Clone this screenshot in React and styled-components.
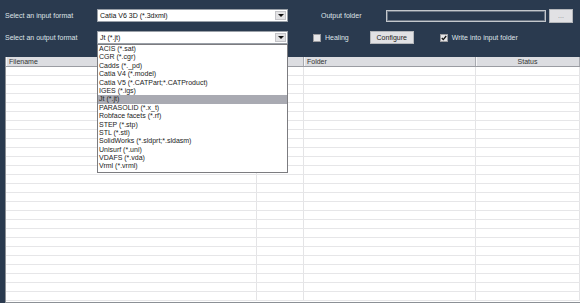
import styled, { createGlobalStyle } from 'styled-components';

const GlobalStyle = createGlobalStyle`
  html, body {
    margin: 0;
    padding: 0;
    background: #2a3a4f;
  }
  * {
    box-sizing: border-box;
  }
`;

const Window = styled.div`
  width: 580px;
  height: 303px;
  overflow: hidden;
  background: #2a3a4f;
  font-family: "Liberation Sans", Arial, sans-serif;
  font-size: 7px;
  color: #dfe3e8;
  padding-top: 9px;
  display: flex;
  flex-direction: column;
`;

const Toolbar = styled.div`
  display: flex;
  flex-direction: column;
  gap: 9px;
  padding-left: 5px;
`;

const Row = styled.div`
  position: relative;
  display: flex;
  align-items: center;
  height: 13px;
`;

const Label = styled.span`
  width: ${p => p.$w}px;
  margin-left: ${p => p.$ml || 0}px;
  white-space: nowrap;
  flex: none;
`;

const Combo = styled.div`
  position: relative;
  width: 191px;
  height: 13px;
  background: #fff;
  border: 1px solid #9aa0a8;
  display: flex;
  align-items: center;
  color: #111;
  padding-left: 2px;
  flex: none;
`;

const ComboArrow = styled.div`
  position: absolute;
  right: 1px;
  top: 1px;
  bottom: 1px;
  width: 11px;
  background: #e2e2e4;
  border: 1px solid #c4c4c8;
  display: flex;
  align-items: center;
  justify-content: center;
  &::after {
    content: '';
    border-left: 3px solid transparent;
    border-right: 3px solid transparent;
    border-top: 3px solid #111;
  }
`;

const DropList = styled.ul`
  position: absolute;
  left: 92px;
  top: 13px;
  width: 191px;
  margin: 0;
  padding: 0 0 1px;
  list-style: none;
  background: #fff;
  border: 1px solid #7c7c80;
  z-index: 5;
`;

const DropItem = styled.li`
  height: 8.4px;
  line-height: 8.4px;
  padding-left: 1px;
  color: #222;
  white-space: nowrap;
  background: ${p => (p.$active ? '#a9aab2' : 'transparent')};
`;

const TextBox = styled.div`
  width: 160px;
  height: 12px;
  border: 1px solid #c3c7cc;
  box-shadow: inset 0 0 0 1px #6c7684;
  flex: none;
`;

const Button = styled.div`
  width: ${p => p.$w}px;
  height: ${p => p.$h}px;
  margin-left: ${p => p.$ml || 0}px;
  background: #e1e1e4;
  border: 1px solid #b4b6ba;
  color: ${p => p.$muted ? '#8a8a90' : '#222'};
  display: flex;
  align-items: center;
  justify-content: center;
  flex: none;
`;

const Check = styled.div`
  width: 8px;
  height: 8px;
  margin-left: ${p => p.$ml || 0}px;
  background: #e6e6e8;
  border: 1px solid #9c9ca0;
  display: flex;
  align-items: center;
  justify-content: center;
  flex: none;
`;

const CheckLabel = styled.span`
  margin-left: 4px;
  white-space: nowrap;
`;

const Table = styled.div`
  margin: 13px 0 0 5px;
  flex: 1;
  background: #fff;
  border-left: 1px solid #8c9096;
  border-bottom: 1px solid #8c9096;
  display: flex;
  flex-direction: column;
  overflow: hidden;
`;

const cols = '251px 47px 172px 1fr';

const HeaderRow = styled.div`
  display: grid;
  grid-template-columns: ${cols};
  height: 10px;
  background: #dcdde1;
  border-bottom: 1px solid #9a9ca2;
  color: #333;
`;

const HeaderCell = styled.div`
  line-height: 9px;
  padding-left: ${p => (p.$center ? 0 : 3)}px;
  text-align: ${p => (p.$center ? 'center' : 'left')};
  border-right: 1px solid #a8aab0;
  box-shadow: inset 1px 0 0 #f6f6f8;
  white-space: nowrap;
`;

const DataRow = styled.div`
  display: grid;
  grid-template-columns: ${cols};
  height: 9px;
  flex: none;
  border-bottom: 1px solid #e6e6e8;
`;

const DataCell = styled.div`
  border-right: 1px solid #e4e4e6;
`;

const formats = [
  'ACIS (*.sat)',
  'CGR (*.cgr)',
  'Cadds (*._pd)',
  'Catia V4 (*.model)',
  'Catia V5 (*.CATPart;*.CATProduct)',
  'IGES (*.igs)',
  'Jt (*.jt)',
  'PARASOLID (*.x_t)',
  'Robface facets (*.rf)',
  'STEP (*.stp)',
  'STL (*.stl)',
  'SolidWorks (*.sldprt;*.sldasm)',
  'Unisurf (*.uni)',
  'VDAFS (*.vda)',
  'Vrml (*.vrml)',
];

function CheckMark() {
  return (
    <svg width="6" height="6" viewBox="0 0 6 6">
      <path d="M0.8 3 L2.3 4.6 L5.2 1" stroke="#111" strokeWidth="1.3" fill="none" />
    </svg>
  );
}

export default function App() {
  const rows = Array.from({ length: 26 });
  return (
    <Window>
      <GlobalStyle />
      <Toolbar>
        <Row>
          <Label $w={92}>Select an input format</Label>
          <Combo>
            Catia V6 3D (*.3dxml)
            <ComboArrow />
          </Combo>
          <Label $w={65} $ml={33}>Output folder</Label>
          <TextBox />
          <Button $w={24} $h={14} $ml={3} $muted>...</Button>
        </Row>
        <Row>
          <Label $w={92}>Select an output format</Label>
          <Combo>
            Jt (*.jt)
            <ComboArrow />
          </Combo>
          <Check $ml={25} />
          <CheckLabel>Healing</CheckLabel>
          <Button $w={44} $h={13} $ml={21}>Configure</Button>
          <Check $ml={26}>
            <CheckMark />
          </Check>
          <CheckLabel>Write into input folder</CheckLabel>
          <DropList>
            {formats.map(f => (
              <DropItem key={f} $active={f === 'Jt (*.jt)'}>{f}</DropItem>
            ))}
          </DropList>
        </Row>
      </Toolbar>
      <Table>
        <HeaderRow>
          <HeaderCell>Filename</HeaderCell>
          <HeaderCell />
          <HeaderCell>Folder</HeaderCell>
          <HeaderCell $center>Status</HeaderCell>
        </HeaderRow>
        {rows.map((_, i) => (
          <DataRow key={i}>
            <DataCell />
            <DataCell />
            <DataCell />
            <DataCell />
          </DataRow>
        ))}
      </Table>
    </Window>
  );
}
